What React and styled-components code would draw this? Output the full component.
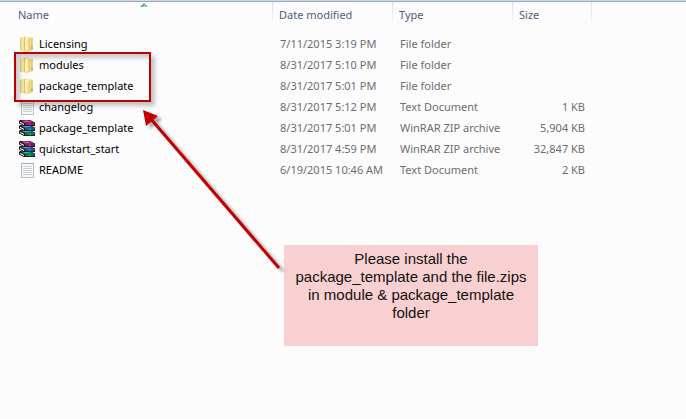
import React from "react";
import styled, { createGlobalStyle } from "styled-components";

const GlobalStyle = createGlobalStyle`
  * { box-sizing: border-box; }
  body {
    margin: 0;
    background: #fcfcfc;
    font-family: "Noto Sans", "Open Sans", sans-serif;
    font-size: 11px;
    color: #6d6d6d;
  }
`;

const Explorer = styled.main`
  position: relative;
  min-height: 100vh;
  overflow: hidden;
  border-top: 1px solid #c9dcec;
`;

const FileTable = styled.table`
  width: 100%;
  table-layout: fixed;
  border-collapse: collapse;
  border-top: 1px solid #93a9c0;
`;

const Column = styled.col`
  width: ${(p) => p.$width};
`;

const HeaderCell = styled.th`
  height: 32px;
  padding: 4px 0 0 ${(p) => p.$indent || "7px"};
  vertical-align: top;
  text-align: left;
  font-weight: 400;
  line-height: 18px;
  color: #4c607a;
  white-space: nowrap;
  background: linear-gradient(#d6e5f5, #e3edf8 60%, #fcfcfc) right top / 1px 22px no-repeat;
  &:last-child { background: none; }
`;

const SortButton = styled.button`
  position: relative;
  display: block;
  width: 100%;
  padding: 0;
  border: 0;
  background: none;
  font: inherit;
  color: inherit;
  text-align: left;
`;

const SortMark = styled.svg`
  position: absolute;
  top: -3px;
  left: 50%;
  margin-left: -6px;
`;

const Cell = styled.td`
  height: 21px;
  padding: 0 ${(p) => (p.$end ? "7px" : "0")} 0 7px;
  line-height: 20px;
  text-align: ${(p) => (p.$end ? "right" : "left")};
  white-space: nowrap;
`;

const NameCell = styled(Cell)`
  padding-left: 19px;
  color: #000;
`;

const FileName = styled.span`
  display: flex;
  align-items: center;
  gap: 4px;
`;

const Icon = styled.svg`
  flex: none;
  width: 16px;
  height: 16px;
`;

const Highlight = styled.div`
  position: absolute;
  top: 51px;
  left: 14px;
  width: 137px;
  height: 50px;
  border: 2px solid #c00000;
  box-shadow: 4px 4px 4px rgba(0, 0, 0, 0.22), inset 4px 4px 4px rgba(0, 0, 0, 0.2);
`;

const Arrow = styled.svg`
  position: absolute;
  top: 99px;
  left: 134px;
  pointer-events: none;
`;

const Callout = styled.p`
  position: absolute;
  top: 244px;
  left: 284px;
  width: 254px;
  min-height: 101px;
  margin: 0;
  padding: 5px 4px;
  background: #f8d0d2;
  color: #111;
  font: 15px/18px "Liberation Sans", Arial, sans-serif;
  text-align: center;
`;

function FolderIcon() {
  return (
    <Icon viewBox="0 0 16 16" aria-hidden="true">
      <path d="M1 2 6 .6l7.5 1.2V14L8 16l-7-1.6z" fill="#f0dc8a" />
      <path d="M1 2 2 1.7v12.9l-1-.2z" fill="#e2c768" />
      <path d="M2 2 5 1v14l-3-.5z" fill="#f3e4a0" />
      <path d="M5 1.2 6 1v13.8l-1 .2z" fill="#dcc064" />
      <path d="M6 1.2 10.5 2v11L6 14.6z" fill="#faf0bf" />
      <path d="M8 3.2 13.5 1.8V14L8 16z" fill="#ebd67c" />
      <path d="M8 3.2 9 3v12.6l-1 .4z" fill="#f6e9a8" />
      <path d="M12.5 2.1 13.5 1.8V14l-1 .4z" fill="#dfc56a" />
      <path d="M12.5 10.5h1V13h-1z" fill="#6aa6c4" />
    </Icon>
  );
}

function TextIcon() {
  return (
    <Icon viewBox="0 0 16 16" aria-hidden="true">
      <path d="M2.5 1.5h12v14h-12z" fill="#f6f8f9" stroke="#b4babe" />
      <path d="M3 1.5h11" stroke="#8f979c" strokeDasharray="1 1" />
      <path d="M4 4.5h9M4 6.5h9M4 8.5h9M4 10.5h9M4 12.5h9" stroke="#c5cfd6" />
    </Icon>
  );
}

function Book({ y, cover, light, shade }) {
  return (
    <g transform={`translate(0 ${y})`}>
      <path d="M1 0h10l5 2.5V6H5L0 3.5V1z" fill="#1a1216" />
      <path d="M1.5.5h9.3l4.4 2.2H5.4z" fill={cover} />
      <path d="M4 .7h5l2 1H5.8z" fill={light} />
      <path d="M6 3h9.5v2.2H6z" fill={shade} />
      <path d="m1 1.8 4 2v1.1l-4-2z" fill="#efefe8" />
      <path d="M9.5 3H12v2.2H9.5z" fill={cover} />
    </g>
  );
}

function ArchiveIcon() {
  return (
    <Icon viewBox="0 0 16 16" aria-hidden="true">
      <Book y={10} cover="#159566" light="#4cc595" shade="#0d7350" />
      <Book y={5} cover="#2179c4" light="#5aaae4" shade="#165596" />
      <Book y={0} cover="#b52a70" light="#dc70a6" shade="#86164c" />
    </Icon>
  );
}

const icons = { folder: FolderIcon, text: TextIcon, archive: ArchiveIcon };

const types = {
  folder: "File folder",
  text: "Text Document",
  archive: "WinRAR ZIP archive",
};

const files = [
  { name: "Licensing", date: "7/11/2015 3:19 PM", kind: "folder" },
  { name: "modules", date: "8/31/2017 5:10 PM", kind: "folder" },
  { name: "package_template", date: "8/31/2017 5:01 PM", kind: "folder" },
  { name: "changelog", date: "8/31/2017 5:12 PM", kind: "text", size: "1 KB" },
  { name: "package_template", date: "8/31/2017 5:01 PM", kind: "archive", size: "5,904 KB" },
  { name: "quickstart_start", date: "8/31/2017 4:59 PM", kind: "archive", size: "32,847 KB" },
  { name: "README", date: "6/19/2015 10:46 AM", kind: "text", size: "2 KB" },
];

function FileRow({ file }) {
  const KindIcon = icons[file.kind];
  return (
    <tr>
      <NameCell>
        <FileName>
          <KindIcon />
          {file.name}
        </FileName>
      </NameCell>
      <Cell>{file.date}</Cell>
      <Cell>{types[file.kind]}</Cell>
      <Cell $end>{file.size}</Cell>
      <Cell />
    </tr>
  );
}

export default function App() {
  return (
    <>
      <GlobalStyle />
      <Explorer>
        <FileTable>
          <colgroup>
            <Column $width="273px" />
            <Column $width="120px" />
            <Column $width="120px" />
            <Column $width="79px" />
            <Column $width="auto" />
          </colgroup>
          <thead>
            <tr>
              <HeaderCell $indent="18px" aria-sort="ascending">
                <SortButton type="button">
                  Name
                  <SortMark width="8" height="4" viewBox="0 0 8 4" aria-hidden="true">
                    <path d="M4 0 8 4H0z" fill="#5c97ad" />
                    <path d="M4 1.5 7 4H3z" fill="#9fd0e0" />
                  </SortMark>
                </SortButton>
              </HeaderCell>
              <HeaderCell $indent="6px"><SortButton type="button">Date modified</SortButton></HeaderCell>
              <HeaderCell $indent="6px"><SortButton type="button">Type</SortButton></HeaderCell>
              <HeaderCell $indent="6px"><SortButton type="button">Size</SortButton></HeaderCell>
              <HeaderCell as="td" />
            </tr>
          </thead>
          <tbody>
            {files.map((file) => (
              <FileRow key={file.name + file.kind} file={file} />
            ))}
          </tbody>
        </FileTable>
        <Highlight />
        <Callout>
          Please install the<br />
          package_template and the file.zips in module &amp; package_template folder
        </Callout>
        <Arrow width="160" height="180" viewBox="0 0 160 180" aria-hidden="true">
          <defs>
            <filter id="arrow-shadow" x="-10%" y="-10%" width="125%" height="125%">
              <feDropShadow dx="4" dy="3" stdDeviation="1.5" floodColor="#000" floodOpacity=".35" />
            </filter>
          </defs>
          <g filter="url(#arrow-shadow)">
            <path d="M16 18 145 168" stroke="#c00000" strokeWidth="3" />
            <path d="M9 10 24 16 12 26z" fill="#c00000" />
          </g>
        </Arrow>
      </Explorer>
    </>
  );
}
